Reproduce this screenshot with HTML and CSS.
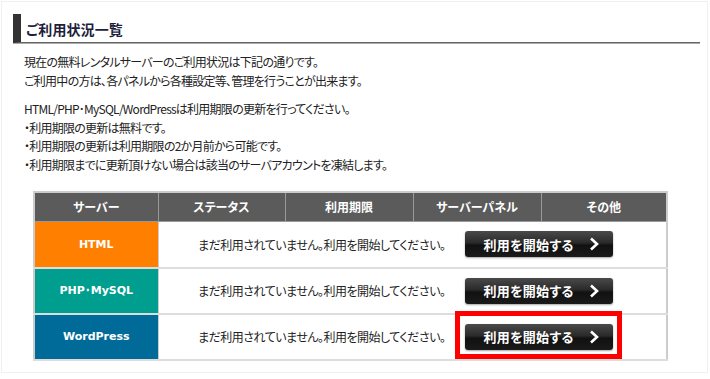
FILE: index.html
```html
<!DOCTYPE html>
<html lang="ja">
<head>
<meta charset="utf-8">
<link rel="stylesheet" href="styles.css">
</head>
<body>
<div class="page">
  <h2 class="title"><span class="title-text">ご利用状況一覧</span></h2>
  <div class="intro">
    <p>現在の無料レンタルサーバーのご利用状況は下記の通りです。<br>ご利用中の方は、各パネルから各種設定等、管理を行うことが出来ます。</p>
    <p>HTML/PHP･MySQL/WordPressは利用期限の更新を行ってください。<br>・利用期限の更新は無料です。<br>・利用期限の更新は利用期限の2か月前から可能です。<br>・利用期限までに更新頂けない場合は該当のサーバアカウントを凍結します。</p>
  </div>
  <div class="table-wrap">
    <table class="servers">
      <thead>
        <tr><th>サーバー</th><th>ステータス</th><th>利用期限</th><th>サーバーパネル</th><th>その他</th></tr>
      </thead>
      <tbody>
        <tr>
          <td class="name html">HTML</td>
          <td colspan="4" class="status"><div class="status-inner"><span class="msg">まだ利用されていません。利用を開始してください。</span><a class="btn">利用を開始する<svg class="chev" width="10" height="14" viewBox="0 0 10 14"><polyline points="2,1.5 8,7 2,12.5" fill="none" stroke="#fff" stroke-width="2.6"/></svg></a></div></td>
        </tr>
        <tr>
          <td class="name php">PHP･MySQL</td>
          <td colspan="4" class="status"><div class="status-inner"><span class="msg">まだ利用されていません。利用を開始してください。</span><a class="btn">利用を開始する<svg class="chev" width="10" height="14" viewBox="0 0 10 14"><polyline points="2,1.5 8,7 2,12.5" fill="none" stroke="#fff" stroke-width="2.6"/></svg></a></div></td>
        </tr>
        <tr>
          <td class="name wp">WordPress</td>
          <td colspan="4" class="status"><div class="status-inner"><span class="msg">まだ利用されていません。利用を開始してください。</span><a class="btn">利用を開始する<svg class="chev" width="10" height="14" viewBox="0 0 10 14"><polyline points="2,1.5 8,7 2,12.5" fill="none" stroke="#fff" stroke-width="2.6"/></svg></a></div></td>
        </tr>
      </tbody>
    </table>
    <div class="highlight"></div>
  </div>
</div>
</body>
</html>
```
FILE: styles.css
```css
* { box-sizing: border-box; }
html, body { margin: 0; padding: 0; background: #fff; }
body {
  font-family: "Noto Sans CJK JP", "Noto Sans", sans-serif;
  font-size: 12px;
  color: #222;
  font-feature-settings: "palt";
}
.page {
  margin: 1px;
  width: 707px;
  height: 372px;
  border: 1px solid #f0f0f0;
  padding: 12px 10px 0 11px;
}
.title {
  margin: 0;
  width: 687px;
  height: 29px;
  border-left: 8px solid #333;
  border-bottom: 1px solid #666;
  box-shadow: 0 1px 0 #aaa;
  display: flex;
  align-items: center;
  padding-left: 5px;
  font-size: 14px;
  font-weight: bold;
  color: #1e1e3c;
  letter-spacing: 0.1px;
}
.title-text { position: relative; top: 1px; }
.intro { padding: 10px 0 0 11px; }
.intro p { margin: 0 0 10px 0; line-height: 18.6px; letter-spacing: -0.75px; }
.table-wrap {
  position: relative;
  margin: 16px 0 0 20px;
  width: 635px;
}
.servers {
  width: 635px;
  border-collapse: collapse;
  border: 2px solid #ccc;
  table-layout: fixed;
}
.servers th {
  background: #5b5b5b;
  color: #fff;
  font-weight: bold;
  height: 30px;
  border: 1px solid #999;
  font-size: 12px;
  padding: 0;
}
.servers th:nth-child(1) { width: 124px; }
.servers th:nth-child(2) { width: 127px; }
.servers th:nth-child(3) { width: 128px; }
.servers th:nth-child(4) { width: 128px; }
.servers td { padding: 0; border-bottom: 2px solid #ddd; }
.servers tbody tr { height: 46px; }
.name {
  color: #fff;
  font-weight: bold;
  text-align: center;
  font-family: "DejaVu Sans", sans-serif;
  font-size: 11px;
  border-right: 1px solid #ccc;
}
.html { background: #ff8000; }
.php { background: #009e8e; }
.wp { background: #006b98; }
.status-inner {
  display: flex;
  align-items: center;
  justify-content: center;
  gap: 20px;
  padding-right: 13px;
}
.msg { letter-spacing: -0.5px; }
.btn {
  display: flex;
  align-items: center;
  justify-content: space-between;
  width: 148px;
  height: 26px;
  padding: 0 14px 0 18px;
  border-radius: 3px;
  background: linear-gradient(#4a4a4a 0%, #2a2a2a 45%, #111 55%, #1a1a1a 100%);
  box-shadow: 0 1px 2px rgba(0,0,0,0.35);
  color: #fff;
  font-weight: bold;
  font-size: 13px;
  letter-spacing: 0.3px;
}
.chev { display: block; }
.highlight {
  position: absolute;
  left: 422px;
  top: 120px;
  width: 167px;
  height: 48px;
  border: 5px solid #f00;
}
```
